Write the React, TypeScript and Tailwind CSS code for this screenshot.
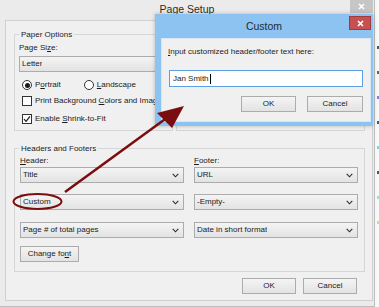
import React from "react"

const ink = "text-[#1b1b1b]"

function Chevron() {
  return (
    <svg width="7" height="5" viewBox="0 0 7 5" className="shrink-0">
      <path d="M0.7 0.8 L3.5 3.8 L6.3 0.8" fill="none" stroke="#2a2a2a" strokeWidth="1.1" />
    </svg>
  )
}

function Select({ value, className = "" }: { value: string; className?: string }) {
  return (
    <div
      className={`flex h-[16px] items-center justify-between border border-[#acacac] bg-linear-to-b from-[#f4f4f4] to-[#e3e3e3] pl-[2px] pr-[4px] ${className}`}
    >
      <span className="truncate leading-[10px]">{value}</span>
      <Chevron />
    </div>
  )
}

function Btn({ children, className = "" }: { children: React.ReactNode; className?: string }) {
  return (
    <button
      type="button"
      className={`flex h-[16px] items-center justify-center border border-[#acacac] bg-linear-to-b from-[#f4f4f4] to-[#e3e3e3] leading-[10px] ${className}`}
    >
      {children}
    </button>
  )
}

function Group({ title, className = "", children }: { title: string; className?: string; children?: React.ReactNode }) {
  return (
    <fieldset className={`min-w-0 border border-[#d6d6d6] ${className}`}>
      <legend className="ml-[4px] px-[2px] leading-[9px]">{title}</legend>
      {children}
    </fieldset>
  )
}

function Radio({ checked }: { checked?: boolean }) {
  return (
    <span className="flex h-[10px] w-[10px] shrink-0 items-center justify-center rounded-full border border-[#333] bg-white">
      {checked && <span className="h-[5px] w-[5px] rounded-full bg-[#1a1a1a]" />}
    </span>
  )
}

function Check({ checked }: { checked?: boolean }) {
  return (
    <span className="flex h-[10px] w-[10px] shrink-0 items-center justify-center border border-[#333] bg-white">
      {checked && (
        <svg width="8" height="8" viewBox="0 0 8 8">
          <path d="M1 4.2 L3.1 6.3 L7 1.3" fill="none" stroke="#1a1a1a" strokeWidth="1.2" />
        </svg>
      )}
    </span>
  )
}

export default function App() {
  return (
    <div
      className={`relative flex h-[307px] w-[379px] overflow-hidden bg-[#f7f7f7] font-['Liberation_Sans',Arial,sans-serif] text-[8px] ${ink}`}
    >
      {/* Page Setup window */}
      <div className="flex h-[307px] w-[375px] shrink-0 flex-col border-r border-b border-[#bdbdbd] bg-[#ebebeb]">
        {/* Title bar */}
        <div className="flex h-[20px] shrink-0 items-start">
          <div className="w-[24px]" />
          <div className="flex-1 pt-[3px] text-center text-[10.5px] leading-[13px] text-[#2b2b2b]">Page Setup</div>
          <div className="flex h-[13px] w-[23px] items-center justify-center bg-[#c6c6c6]">
            <svg width="7" height="7" viewBox="0 0 7 7">
              <path d="M1 1 L6 6 M6 1 L1 6" stroke="#fff" strokeWidth="1.6" />
            </svg>
          </div>
          <div className="w-[1px]" />
        </div>

        {/* Client area */}
        <div className="mb-[5px] ml-[5px] mr-[1px] flex flex-1 flex-col border border-[#cfcfcf] bg-[#f0f0f0] pl-[8px] pr-[7px] pt-[9px]">
          {/* Top groups */}
          <div className="flex h-[101px] shrink-0 gap-[3px]">
            <Group title="Paper Options" className="h-[101px] w-[159px] shrink-0">
              <div className="flex flex-col pl-[4px] pr-[5px] pt-[4px]">
                <div className="leading-[10px]">
                  Page Si<span className="underline">z</span>e:
                </div>
                <Select value="Letter" className="mt-[3px]" />
                <div className="mt-[8px] flex h-[10px] items-center pl-[3px]">
                  <Radio checked />
                  <span className="ml-[3px] leading-[10px]">
                    P<span className="underline">o</span>rtrait
                  </span>
                  <span className="ml-[23px]">
                    <Radio />
                  </span>
                  <span className="ml-[3px] leading-[10px]">
                    <span className="underline">L</span>andscape
                  </span>
                </div>
                <div className="mt-[6px] flex h-[10px] items-center pl-[3px]">
                  <Check />
                  <span className="ml-[3px] whitespace-nowrap leading-[10px]">
                    Print Background <span className="underline">C</span>olors and Images
                  </span>
                </div>
                <div className="mt-[8px] flex h-[10px] items-center pl-[3px]">
                  <Check checked />
                  <span className="ml-[3px] leading-[10px]">
                    Enable <span className="underline">S</span>hrink-to-Fit
                  </span>
                </div>
              </div>
            </Group>
            <Group title="Margins (inches)" className="h-[101px] flex-1" />
          </div>

          {/* Headers and Footers */}
          <Group title="Headers and Footers" className="mt-[13px] h-[128px] shrink-0">
            <div className="flex gap-[10px] pl-[5px] pr-[6px] pt-[3px]">
              <div className="flex w-[164px] flex-col">
                <div className="leading-[10px]">
                  <span className="underline">H</span>eader:
                </div>
                <Select value="Title" className="mt-[1px]" />
                <Select value="Custom" className="mt-[11px]" />
                <Select value="Page # of total pages" className="mt-[12px]" />
                <Btn className="mt-[8px] w-[59px]">
                  Change fo<span className="underline">n</span>t
                </Btn>
              </div>
              <div className="flex flex-1 flex-col">
                <div className="leading-[10px]">
                  <span className="underline">F</span>ooter:
                </div>
                <Select value="URL" className="mt-[1px]" />
                <Select value="-Empty-" className="mt-[11px]" />
                <Select value="Date in short format" className="mt-[12px]" />
              </div>
            </div>
          </Group>

          {/* Dialog buttons */}
          <div className="mt-[6px] flex justify-end gap-[7px] pr-[8px]">
            <Btn className="w-[54px]">OK</Btn>
            <Btn className="w-[54px]">Cancel</Btn>
          </div>
        </div>
      </div>

      {/* Sliver of the page behind */}
      <div className="flex flex-1 flex-col gap-[22px] bg-[#f8f8f8] pt-[46px]">
        <span className="ml-[2px] h-[3px] w-[2px] bg-[#555]" />
        <span className="ml-[2px] h-[3px] w-[2px] bg-[#666]" />
        <span className="ml-[2px] h-[3px] w-[2px] bg-[#8a7fd0]" />
        <span className="ml-[2px] h-[3px] w-[2px] bg-[#555]" />
        <span className="ml-[2px] h-[3px] w-[2px] bg-[#7fd2d8]" />
        <span className="ml-[2px] h-[3px] w-[2px] bg-[#555]" />
        <span className="ml-[2px] h-[3px] w-[2px] bg-[#9fe0c8]" />
        <span className="ml-[2px] h-[3px] w-[2px] bg-[#e8c9a0]" />
      </div>

      {/* Custom dialog over the window */}
      <div className="absolute left-[155px] top-[14px] flex h-[112px] w-[218px] flex-col bg-[#8cc3f1] shadow-[0_0_4px_rgba(0,0,0,0.25)]">
        <div className="relative h-[24px] shrink-0 pt-[6px] text-center text-[10.5px] leading-[13px] text-[#1f2b36]">
          Custom
          <div className="absolute right-[2px] top-[2px] flex h-[14px] w-[22px] items-center justify-center border border-[#a33a3a] bg-[#c75050]">
            <svg width="7" height="7" viewBox="0 0 7 7">
              <path d="M1 1 L6 6 M6 1 L1 6" stroke="#fff" strokeWidth="1.6" />
            </svg>
          </div>
        </div>
        <div className="mb-[4px] ml-[6px] mr-[2px] flex flex-1 flex-col border border-[#d9e6f2] bg-[#f0f0f0] pl-[6px] pr-[7px] pt-[8px]">
          <div className="leading-[10px]">
            <span className="underline">I</span>nput customized header/footer text here:
          </div>
          <div className="ml-[1px] mt-[13px] flex h-[17px] items-center border border-[#5c9fe2] bg-white pl-[3px]">
            <span className="leading-[10px]">Jan Smith</span>
            <span className="ml-[1px] h-[10px] w-[1px] bg-black" />
          </div>
          <div className="mt-[9px] flex justify-end gap-[11px]">
            <Btn className="w-[55px] border-[#4f95d8]">OK</Btn>
            <Btn className="w-[56px]">Cancel</Btn>
          </div>
        </div>
      </div>

      {/* Annotation: ellipse and arrow */}
      <svg className="pointer-events-none absolute left-0 top-0" width="379" height="307" viewBox="0 0 379 307">
        <ellipse cx="37.5" cy="201.5" rx="24" ry="7.5" fill="none" stroke="#7a0d0d" strokeWidth="2" />
        <line x1="65" y1="192" x2="168" y2="117" stroke="#7a0d0d" strokeWidth="2.5" />
        <polygon points="157,113 184,106 172,128" fill="#7a0d0d" />
      </svg>
    </div>
  )
}
